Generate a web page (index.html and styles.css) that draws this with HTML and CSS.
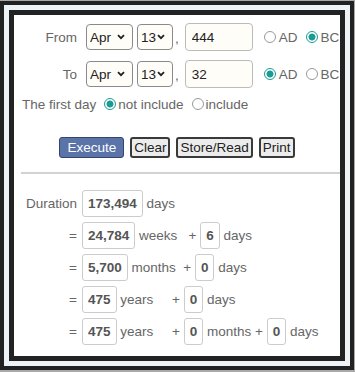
FILE: index.html
```html
<!DOCTYPE html>
<html lang="en">

<head>
    <meta charset="UTF-8">
    <meta name="viewport" content="width=device-width, initial-scale=1.0">
    <title>Date Duration</title>
    <link rel="stylesheet" href="styles.css">
</head>

<body>

    <div class="frame">
        <div class="panel">

            <div class="row first">
                <span class="lbl">From</span>
                <span class="selwrap mon">
                    <select class="sel">
                        <option>Apr</option>
                    </select>
                    <svg class="chev" width="8" height="6" viewBox="0 0 8 6"><path d="M1 1.2l3 3 3-3" fill="none" stroke="#222" stroke-width="1.8"/></svg>
                </span>
                <span class="selwrap day">
                    <select class="sel">
                        <option>13</option>
                    </select>
                    <svg class="chev" width="8" height="6" viewBox="0 0 8 6"><path d="M1 1.2l3 3 3-3" fill="none" stroke="#222" stroke-width="1.8"/></svg>
                </span>
                <span class="comma">,</span>
                <input class="year" type="text" value="444">
                <label class="era"><input type="radio" name="era1"><span>AD</span></label>
                <label class="era"><input type="radio" name="era1" checked><span>BC</span></label>
            </div>

            <div class="row second">
                <span class="lbl">To</span>
                <span class="selwrap mon">
                    <select class="sel">
                        <option>Apr</option>
                    </select>
                    <svg class="chev" width="8" height="6" viewBox="0 0 8 6"><path d="M1 1.2l3 3 3-3" fill="none" stroke="#222" stroke-width="1.8"/></svg>
                </span>
                <span class="selwrap day">
                    <select class="sel">
                        <option>13</option>
                    </select>
                    <svg class="chev" width="8" height="6" viewBox="0 0 8 6"><path d="M1 1.2l3 3 3-3" fill="none" stroke="#222" stroke-width="1.8"/></svg>
                </span>
                <span class="comma">,</span>
                <input class="year" type="text" value="32">
                <label class="era"><input type="radio" name="era2" checked><span>AD</span></label>
                <label class="era"><input type="radio" name="era2"><span>BC</span></label>
            </div>

            <div class="row third">
                <span class="firstday">The first day</span>
                <label class="opt"><input type="radio" name="inc" checked><span>not include</span></label>
                <label class="opt"><input type="radio" name="inc"><span>include</span></label>
            </div>

            <div class="buttons">
                <button class="btn exec">Execute</button>
                <button class="btn">Clear</button>
                <button class="btn">Store/Read</button>
                <button class="btn">Print</button>
            </div>

            <hr class="sep">

            <div class="res dur"><span class="rlbl">Duration</span><span class="num">173,494</span> days</div>
            <div class="res"><span class="rlbl">=</span><span class="num">24,784</span> weeks&nbsp;&nbsp; + <span class="num">6</span> days</div>
            <div class="res"><span class="rlbl">=</span><span class="num">5,700</span> months&nbsp; + <span class="num">0</span> days</div>
            <div class="res"><span class="rlbl">=</span><span class="num">475</span> years&nbsp;&nbsp;&nbsp;&nbsp; + <span class="num">0</span> days</div>
            <div class="res"><span class="rlbl">=</span><span class="num">475</span> years&nbsp;&nbsp;&nbsp;&nbsp; + <span class="num">0</span> months&nbsp;+ <span class="num">0</span> days</div>

        </div>
    </div>

</body>

</html>
```

FILE: styles.css
```css
body {
    margin: 0;
    padding-top: 1px;
    background-color: #a9a9a9;
    font-family: "Liberation Sans", Arial, sans-serif;
    font-size: 13.5px;
    color: #666;
}

.frame {
    box-sizing: border-box;
    width: 354px;
    height: 369px;
    border: 4px solid #222;
    padding: 5px;
    background-color: #eef3f8;
}

.panel {
    box-sizing: border-box;
    height: 100%;
    border: 5px solid #222;
    background-color: white;
    overflow: hidden;
    padding-left: 8px;
    white-space: nowrap;
}

.row {
    display: flex;
    align-items: center;
}

.row > * {
    flex-shrink: 0;
}

.first {
    height: 28px;
    margin-top: 8px;
}

.second {
    height: 28px;
    margin-top: 9px;
}

.third {
    height: 20px;
    margin-top: 6px;
}

.lbl {
    width: 55px;
    margin-right: 9px;
    text-align: right;
}

.selwrap {
    position: relative;
    display: block;
    height: 26px;
}

.sel {
    appearance: none;
    -webkit-appearance: none;
    box-sizing: border-box;
    width: 100%;
    height: 26px;
    border: 1px solid #8a8a8a;
    border-radius: 4px;
    background-color: #fffdf8;
    font: inherit;
    color: #222;
    padding: 0 0 0 3px;
    margin: 0;
}

.chev {
    position: absolute;
    top: 10px;
    right: 8px;
    pointer-events: none;
}

.mon {
    width: 47px;
}

.day {
    width: 36px;
    margin-left: 4px;
}

.day .chev {
    right: 8px;
}

.comma {
    margin: 0 6px 0 2px;
    align-self: flex-end;
    padding-bottom: 5px;
}

.year {
    box-sizing: border-box;
    width: 68px;
    height: 28px;
    border: 1px solid #bbb;
    border-radius: 4px;
    background-color: #fffdf8;
    font: inherit;
    color: #222;
    padding: 0 6px;
    margin: 0 8px 0 0;
}

.era,
.opt {
    display: flex;
    align-items: center;
    margin-left: 3px;
}

.era input {
    margin-right: 4px;
}

.era span {
    margin-right: 5px;
}

input[type=radio] {
    appearance: none;
    -webkit-appearance: none;
    box-sizing: border-box;
    width: 12px;
    height: 12px;
    margin: 0 3px 0 0;
    border: 1px solid #999;
    border-radius: 50%;
    background-color: white;
}

input[type=radio]:checked {
    border-color: #199c94;
    background: radial-gradient(circle, #199c94 0 3.2px, white 3.8px);
}

.firstday {
    margin-right: 5px;
}

.opt input {
    margin-right: 2px;
}

.opt span {
    margin-right: 5px;
}

.buttons {
    display: flex;
    justify-content: center;
    gap: 6px;
    margin-top: 23px;
    margin-left: -8px;
}

.btn {
    height: 21px;
    font: inherit;
    color: #222;
    background-color: #ececec;
    border: 2px solid #3a3a3a;
    border-radius: 3px;
    padding: 0 2px;
}

.btn.exec {
    background-color: #5a73a8;
    border: 1px solid #34446a;
    color: white;
    padding: 0 7px;
}

.sep {
    height: 0;
    border: none;
    border-top: 2px solid #d2d2d2;
    margin: 14px 0 0 -1px;
}

.res {
    height: 27px;
    line-height: 27px;
    margin-top: 5px;
}

.res.dur {
    margin-top: 16px;
}

.rlbl {
    display: inline-block;
    width: 55px;
    margin-right: 5px;
    text-align: right;
    vertical-align: top;
}

.num {
    display: inline-block;
    vertical-align: top;
    box-sizing: border-box;
    height: 27px;
    line-height: 25px;
    border: 1px solid #ccc;
    border-radius: 3px;
    padding: 0 5px;
    font-weight: bold;
    color: #555;
}
```
